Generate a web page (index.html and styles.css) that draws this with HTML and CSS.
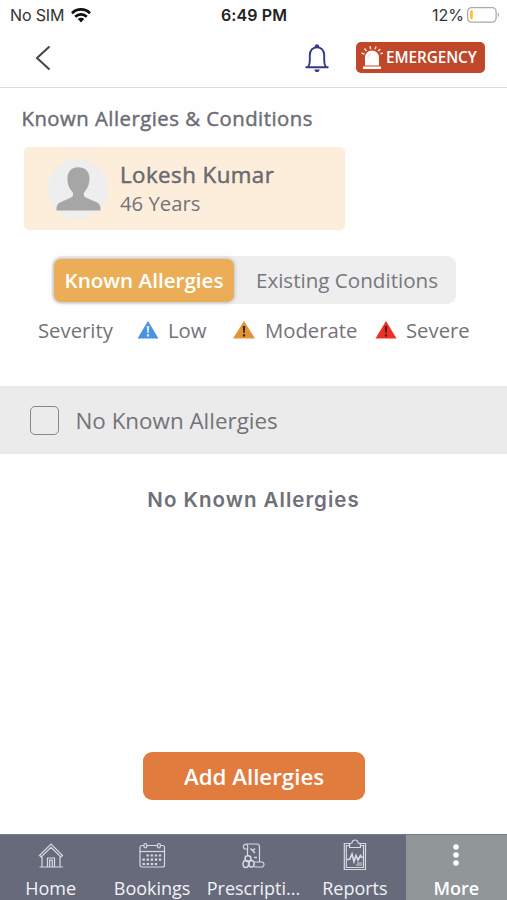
FILE: index.html
```html
<!DOCTYPE html>
<html lang="en">
<head>
<meta charset="utf-8">
<title>Known Allergies &amp; Conditions</title>
<link rel="stylesheet" href="styles.css">
</head>
<body>
<div class="app">
  <div class="status">
    <div class="status-left"><span>No SIM</span>
      <svg class="wifi" width="20" height="15" viewBox="0 0 20 15"><g fill="none" stroke="#111" stroke-width="2.7"><path d="M1 5.2C6 .2 14 .2 19 5.2"/><path d="M4.200 8.700c3.300-3.200 8.300-3.200 11.600 0"/></g><path d="M6.800 11.100c1.900-1.700 4.500-1.700 6.400 0L10 14.400z" fill="#111"/></svg>
    </div>
    <span class="clock">6:49 PM</span>
    <div class="status-right"><span>12%</span>
      <svg width="34" height="18" viewBox="0 0 34 18"><rect x="1.600" y="1.600" width="28.500" height="14.500" rx="4" fill="#fff" stroke="#aaa" stroke-width="1.300"/><rect x="4" y="4.300" width="2.800" height="9" rx="1" fill="#f9c62e"/><path d="M31.800 6.500c1.800.8 1.800 4 0 4.800z" fill="#aaa"/></svg>
    </div>
  </div>
  <header class="topbar">
    <svg class="back" width="18" height="28" viewBox="0 0 18 28"><path d="M15.500 2.500 3 14l12.500 11.500" fill="none" stroke="#444" stroke-width="2"/></svg>
    <svg class="bell" width="26" height="30" viewBox="0 0 26 30"><g fill="none" stroke="#34388a" stroke-width="1.900"><path d="M1.500 24.200h23M4.200 24c1.200-1.800 1.600-3.600 1.600-6.500v-5.200C5.800 7.500 8.800 4.200 13 4.200s7.200 3.300 7.200 8.100v5.200c0 2.900.4 4.700 1.600 6.500"/></g><path d="M10.600 4.500C10.600 0 15.400 0 15.400 4.500zM10.300 26.500h5.400c-.5 3.400-4.900 3.400-5.400 0z" fill="#34388a"/></svg>
    <button class="emergency">
      <svg width="22" height="24" viewBox="0 0 22 24"><path d="M4 19.500v-8a7 7 0 0 1 14 0v8zM2 20.500h18V23H2z" fill="#fff"/><g stroke="#ffe3c5" stroke-width="1.500"><path d="M.5 6.800l3 1.600M3.500 2.500l2 2.500M9 .2l.6 3M15 .5l-1 2.800M19.300 3l-2.200 2.100M21.800 7l-2.500.9"/></g><path d="M6.800 11.500c.3-2 1.500-3.100 3.200-3.500" fill="none" stroke="#e9ad9c" stroke-width=".8"/></svg>
      <span>EMERGENCY</span>
    </button>
  </header>
  <main>
    <h1>Known Allergies &amp; Conditions</h1>
    <section class="patient">
      <svg width="60" height="60" viewBox="0 0 60 60"><circle cx="30" cy="30" r="30" fill="#eee"/><path d="M8.500 51.500c0-5 .8-7 4.500-8.600l8.500-3.600c3.500-1.500 4.400-3.300 3-6.300-3.700-4-5-8-5-13.500C19.500 12 24 8.200 30.300 8.200S41.500 12 41.500 19.500c0 5.500-1.600 9.500-5 13.500-1.600 3-.7 4.800 3 6.300l8.500 3.600c3.700 1.600 4.500 3.600 4.500 8.600z" fill="#a6a6a6"/></svg>
      <div><div class="name">Lokesh Kumar</div><div class="age">46 Years</div></div>
    </section>
    <div class="tabs"><button class="tab active"><span>Known Allergies</span></button><button class="tab"><span>Existing Conditions</span></button></div>
    <div class="legend">
      <span class="severity">Severity</span>
      <span class="level low"><svg width="22" height="18" viewBox="0 0 22 18"><path d="M11 0 21.500 17.500H.5z" fill="#4a93df"/><path d="M9.700 5h2.600l-.6 7h-1.400zM9.900 13.200h2.200v2.200H9.900z" fill="#d9ecff"/></svg><b>Low</b></span>
      <span class="level moderate"><svg width="22" height="18" viewBox="0 0 22 18"><path d="M11 0 22 17.500H0z" fill="#e19539"/><path d="M9.700 5h2.600l-.6 7h-1.400zM9.900 13.200h2.200v2.200H9.900z" fill="#40250c"/></svg><b>Moderate</b></span>
      <span class="level severe"><svg width="22" height="18" viewBox="0 0 22 18"><path d="M11 0 21.500 17.500H.5z" fill="#ed3027"/><path d="M9.700 5h2.600l-.6 7h-1.400zM9.900 13.200h2.200v2.200H9.900z" fill="#5c1010"/></svg><b>Severe</b></span>
    </div>
    <label class="none-row"><span class="box"></span><span class="none-text">No Known Allergies</span></label>
    <p class="empty">No Known Allergies</p>
    <button class="add"><span>Add Allergies</span></button>
  </main>
  <nav>
    <a class="item"><svg width="32" height="34" viewBox="0 0 32 34"><path d="M4.500 16.500 16 5l11.500 11.500-1.700 1.400L16 8.300l-9.800 9.600zM7 18v10M25 18v10M4.500 28h23.500M12.500 27.500V19H19.500v8.500M14.700 27.500v-6.300h2.600v6.300"/></svg><span>Home</span></a>
    <a class="item"><svg width="32" height="34" viewBox="0 0 32 34"><rect x="4" y="6.500" width="24.500" height="21.500" rx="2"/><path d="M4 12.500h24.500"/><g fill="#666a7a"><rect x="8" y="4.500" width="2.800" height="4.500" rx="1.400"/><rect x="21.500" y="4.500" width="2.800" height="4.500" rx="1.400"/></g><g stroke-dasharray="2.400 1.700" stroke-width="2.200"><path d="M10.500 16.500h16M6.500 20.700h20M6.500 25h16"/></g></svg><span>Bookings</span></a>
    <a class="item"><svg width="32" height="34" viewBox="0 0 32 34"><path d="M10 10H7.500C5.500 8 6.500 5 9 5h11c2 0 2.500 1.500 2.500 3.500V23M9 5c2 1 2 3 1.500 5v7M17 28h8.500c2-1 2-4 0-5h-8"/><path stroke-width="1.500" d="M13.500 9.500l4.500 4.500M18 9.500l-2 2M17 18.500h3"/><g stroke-width="1.500"><ellipse cx="11" cy="19.500" rx="3" ry="2.700"/><ellipse cx="8.800" cy="25" rx="2.800" ry="3.500"/><ellipse cx="14.500" cy="24.800" rx="2.700" ry="3.300"/></g></svg><span>Prescripti...</span></a>
    <a class="item"><svg width="32" height="34" viewBox="0 0 32 34"><path d="M5.300 4.500h21.200v26H5.300zM7.300 6.500h17.200v22H7.300z"/><path fill="#666a7a" d="M10.500 8.500v-2c0-2 1.500-2.500 2.500-2.500 0-4 6-4 6 0 1 0 2.500.5 2.500 2.500v2z"/><path stroke-width="1.700" d="M8 20.500h2.500L13 15l2 7.500 2-6 2 4.500 2.500-4.500 2 2.500"/><path d="M17 26h6M18 24h5"/></svg><span>Reports</span></a>
    <a class="item more"><svg width="32" height="34" viewBox="0 0 32 34"><g class="dots"><circle cx="16" cy="8" r="2.800"/><circle cx="16" cy="16" r="2.800"/><circle cx="16" cy="24" r="2.800"/></g></svg><span>More</span></a>
  </nav>
</div>
</body>
</html>
```
FILE: styles.css
```css
* { box-sizing: border-box; }
body { margin: 0; background: #fefefe; font-family: "Open Sans", sans-serif; color: #737378; }
button { border: 0; padding: 0; font: inherit; }
span, .name, .age { white-space: nowrap; }
svg { display: block; flex: none; }
.app { width: 507px; height: 900px; display: flex; flex-direction: column; overflow: hidden; }
.status { height: 30px; display: grid; grid-template-columns: 1fr auto 1fr; align-items: center; padding: 0 7px 0 10px; font: 16px/20px Inter, sans-serif; color: #333; }
.status-left, .status-right { display: flex; align-items: center; }
.status-left { gap: 7px; letter-spacing: -.15px; }
.status-right { justify-content: flex-end; gap: 2px; }
.clock { font-weight: 600; color: #222; letter-spacing: .1px; margin-left: -2px; }
.topbar { height: 58px; display: flex; align-items: center; border-bottom: 1.500px solid #dcdcdc; padding: 0 22px 2px 34px; }
.bell { margin-left: auto; margin-right: 26px; }
.emergency { width: 129px; height: 31px; border-radius: 5px; background: #c1472a; color: #fff; display: flex; align-items: center; gap: 3px; padding-left: 5px; font-size: 15.300px; line-height: 20px; font-weight: 600; letter-spacing: -.07px; }
.emergency span { padding-bottom: 2px; }
main { flex: 1; display: flex; flex-direction: column; }
h1 { margin: 15px 0 0 21.500px; font-size: 20.300px; line-height: 30px; font-weight: 400; letter-spacing: .5px; -webkit-text-stroke: .45px #6c6d74; color: #6c6d74; }
.patient { margin: 14px 0 0 24px; width: 321px; height: 83px; border-radius: 5px; background: #fdeedc; display: flex; align-items: center; gap: 12px; padding-left: 24px; }
.name { font-size: 22.300px; line-height: 30px; font-weight: 400; letter-spacing: .45px; -webkit-text-stroke: .5px #6a6a70; color: #6a6a70; }
.age { font-size: 20.300px; line-height: 27px; }
.tabs { margin: 26px 0 0 52px; width: 404px; height: 48px; border-radius: 9px; background: #eee; display: flex; align-items: center; padding-left: 2px; }
.tab { flex: 1; height: 43px; background: none; font-size: 20.600px; color: #77777c; padding-left: 4px; }
.tab.active { flex: none; width: 180px; padding: 0; border-radius: 7px; background: #ebae57; color: #fff; font-weight: 600; box-shadow: 0 0 4px #aaa; }
.legend { margin: 11px 0 0 38px; height: 30px; display: flex; align-items: center; font-size: 20.300px; }
.level { display: flex; align-items: center; gap: 9px; }
.level b { font-weight: 400; }
.severity { width: 75px; }
.low { margin-left: 24px; width: 96px; }
.moderate { width: 142px; gap: 10px; }
.none-row { margin-top: 41px; height: 68px; background: #ebebeb; display: flex; align-items: center; gap: 16.500px; padding-left: 30px; font-size: 22.400px; }
.box { width: 29px; height: 29px; border: 1.500px solid #85858a; border-radius: 5px; }
.empty { margin: 31px 0 0; text-align: center; font-family: Inter, sans-serif; font-size: 20.500px; line-height: 30px; font-weight: 600; letter-spacing: 1px; color: #6f7078; }
.add { margin: auto auto 34px 143px; width: 222px; height: 48px; border-radius: 9px; background: #e17c3e; color: #fff; font-size: 22.300px; font-weight: 600; }
nav { height: 66px; display: grid; grid-template-columns: repeat(5, 1fr); background: #666a7a; border-top: 1px solid #777b88; }
.item { display: flex; flex-direction: column; align-items: center; padding-top: 4px; color: #f2f2f6; font-size: 18px; }
.item span { line-height: 30px; }
.item svg { fill: none; stroke: #d8d9e1; stroke-width: 1.200; }
.more { background: #919699; font-weight: 600; color: #fff; }
.item .dots { fill: #fff; stroke: none; }
```
